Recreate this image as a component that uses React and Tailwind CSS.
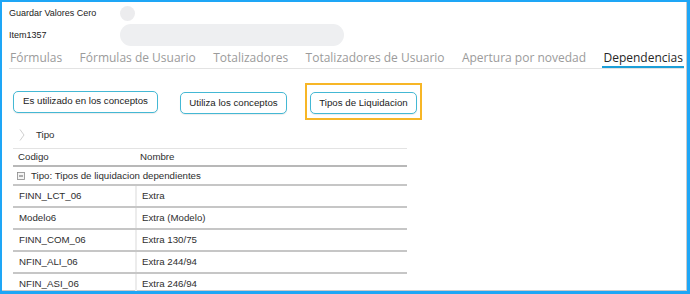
import React from 'react';

const TABS = [
  { label: 'Fórmulas' },
  { label: 'Fórmulas de Usuario' },
  { label: 'Totalizadores' },
  { label: 'Totalizadores de Usuario' },
  { label: 'Apertura por novedad' },
  { label: 'Dependencias', active: true },
];

const ROWS = [
  ['FINN_LCT_06', 'Extra'],
  ['Modelo6', 'Extra (Modelo)'],
  ['FINN_COM_06', 'Extra 130/75'],
  ['NFIN_ALI_06', 'Extra 244/94'],
  ['NFIN_ASI_06', 'Extra 246/94'],
];

const Btn = ({ label, w }) => (
  <button
    className={`${w} h-[22px] shrink-0 rounded-[5px] border border-[#44b8d4] bg-white text-[9.7px] text-[#222] shadow-[0_1px_1px_rgba(0,0,0,0.08)]`}
  >
    {label}
  </button>
);

export default function App() {
  return (
    <div className="w-[690px] h-[294px] overflow-hidden border-l-2 border-t-2 border-r-[3px] border-b-[3px] border-[#1ea6f6] bg-white font-['Liberation_Sans',Arial,sans-serif] text-[#222]">
      <div className="h-full border-r border-b border-[#c9c9c9] pl-[7px] pr-[2px]">
        {/* top fields */}
        <div className="h-[22px] flex items-center">
          <span className="w-[111px] text-[9px] leading-none">Guardar Valores Cero</span>
          <span className="w-[15px] h-[15px] rounded-full bg-[#ececee]" />
        </div>
        <div className="h-[22px] flex items-center">
          <span className="w-[111px] text-[9px] leading-none">Item1357</span>
          <span className="w-[224px] h-[22px] rounded-full bg-[#eeeff1]" />
        </div>

        {/* tabs */}
        <div className="h-[23px] flex justify-between border-b border-[#e3e3e3] font-['Open_Sans',sans-serif] text-[12px]">
          {TABS.map((t) => (
            <div
              key={t.label}
              className={`h-full flex items-center px-[1px] pt-[3px] border-b-2 ${
                t.active ? 'border-[#1c9fd8] text-[#262626]' : 'border-transparent text-[#9b9b9b]'
              }`}
            >
              {t.label}
            </div>
          ))}
        </div>

        <div className="pl-[4px]">
          {/* action buttons */}
          <div className="mt-[14px] flex items-center">
            <Btn label="Es utilizado en los conceptos" w="w-[145px]" />
            <div className="ml-[22px]">
              <Btn label="Utiliza los conceptos" w="w-[107px]" />
            </div>
            <div className="ml-[18px] border-2 border-[#f7b626] px-[3px] py-[4px]">
              <Btn label="Tipos de Liquidacion" w="w-[107px]" />
            </div>
          </div>

          {/* grid */}
          <div className="w-[394px] text-[9.7px] text-[#2e2e2e]">
            <div className="h-[29px] pt-[1px] flex items-center border-b border-[#e3e3e3]">
              <svg width="6" height="12" viewBox="0 0 6 12" className="ml-[6px]">
                <polyline points="1,0.5 5,6 1,11.5" fill="none" stroke="#c9c9c9" strokeWidth="0.9" />
              </svg>
              <span className="ml-[11px]">Tipo</span>
            </div>

            <div className="h-[18px] flex items-start pt-[1px] border-b-2 border-[#b8b8b8]">
              <div className="w-[124px] pl-[5px]">Codigo</div>
              <div className="pl-[3px]">Nombre</div>
            </div>

            <div className="h-[19px] flex items-center border-b-2 border-[#c6c6c6]">
              <svg width="8" height="8" viewBox="0 0 8 8" className="ml-[4px]">
                <rect x="0.5" y="0.5" width="7" height="7" fill="#f4f4f4" stroke="#8a8a8a" strokeWidth="0.8" />
                <line x1="2" y1="4" x2="6" y2="4" stroke="#555" strokeWidth="0.9" />
              </svg>
              <span className="ml-[6px]">Tipo: Tipos de liquidacion dependientes</span>
            </div>

            {ROWS.map(([code, name]) => (
              <div key={code} className="h-[22px] flex border-b-2 border-[#c6c6c6]">
                <div className="w-[124px] pl-[6px] flex items-center border-r-2 border-[#ececec]">{code}</div>
                <div className="pl-[5px] flex items-center">{name}</div>
              </div>
            ))}
          </div>
        </div>
      </div>
    </div>
  );
}
